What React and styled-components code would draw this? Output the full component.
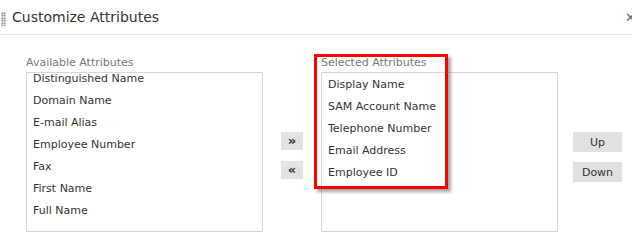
import React from "react";
import styled, { createGlobalStyle } from "styled-components";

const Global = createGlobalStyle`
  html, body { margin: 0; padding: 0; background: #fff; overflow: hidden; }
  body { font-family: "DejaVu Sans", Verdana, sans-serif; color: #333; }
  * { box-sizing: border-box; }
`;

const Dialog = styled.div`
  position: relative;
  width: 640px;
  height: 245px;
  background: #fff;
`;

const TitleBar = styled.div`
  height: 35px;
  display: flex;
  align-items: center;
  border-bottom: 1px solid #e3e3e3;
  padding-left: 1px;
  padding-right: 4px;
`;

const Grip = styled.span`
  width: 5px;
  height: 14px;
  margin-top: 3px;
  background-image: radial-gradient(circle, #999 0.9px, transparent 1px);
  background-size: 2.5px 2.5px;
`;

const Title = styled.h1`
  flex: 1;
  margin: 0 0 0 6px;
  font-size: 14px;
  font-weight: normal;
  color: #333;
`;

const Close = styled.span`
  font-size: 13px;
  color: #666;
  line-height: 1;
`;

const Body = styled.div`
  display: flex;
  align-items: flex-start;
  padding: 21px 0 0 26px;
`;

const Column = styled.div`
  display: flex;
  flex-direction: column;
  width: 237px;
`;

const Label = styled.div`
  font-size: 11px;
  color: #777;
  height: 16px;
  line-height: 14px;
`;

const ListBox = styled.div`
  height: 160px;
  border: 1px solid #d6d6d6;
  overflow: hidden;
`;

const List = styled.ul`
  list-style: none;
  margin: ${(p) => p.$offset}px 0 0 0;
  padding: 0;
`;

const Item = styled.li`
  height: 22px;
  line-height: 22px;
  padding-left: 6px;
  font-size: 11px;
  color: #333;
  white-space: nowrap;
`;

const ArrowCol = styled.div`
  display: flex;
  flex-direction: column;
  gap: 11px;
  margin: 76px 18px 0 18px;
`;

const ArrowButton = styled.button`
  width: 22px;
  height: 18px;
  padding: 0;
  border: none;
  background: #e1e3e4;
  color: #333;
  font-family: "DejaVu Sans", sans-serif;
  font-size: 13px;
  font-weight: bold;
  line-height: 16px;
`;

const ActionCol = styled.div`
  display: flex;
  flex-direction: column;
  gap: 10px;
  margin: 76px 0 0 15px;
`;

const ActionButton = styled.button`
  width: 49px;
  height: 20px;
  padding: 0;
  border: none;
  background: #dfe1e2;
  color: #333;
  font-family: "DejaVu Sans", sans-serif;
  font-size: 11px;
`;

const Highlight = styled.div`
  position: absolute;
  left: 314px;
  top: 54px;
  width: 134px;
  height: 135px;
  border: 3px solid #f00;
  box-shadow: 3px 3px 3px rgba(0, 0, 0, 0.35);
  pointer-events: none;
`;

const available = [
  "Distinguished Name",
  "Domain Name",
  "E-mail Alias",
  "Employee Number",
  "Fax",
  "First Name",
  "Full Name",
];

const selected = [
  "Display Name",
  "SAM Account Name",
  "Telephone Number",
  "Email Address",
  "Employee ID",
];

export default function App() {
  return (
    <Dialog>
      <Global />
      <TitleBar>
        <Grip />
        <Title>Customize Attributes</Title>
        <Close>✕</Close>
      </TitleBar>
      <Body>
        <Column>
          <Label>Available Attributes</Label>
          <ListBox>
            <List $offset={-5}>
              {available.map((a) => (
                <Item key={a}>{a}</Item>
              ))}
            </List>
          </ListBox>
        </Column>
        <ArrowCol>
          <ArrowButton>»</ArrowButton>
          <ArrowButton>«</ArrowButton>
        </ArrowCol>
        <Column>
          <Label>Selected Attributes</Label>
          <ListBox>
            <List $offset={1}>
              {selected.map((a) => (
                <Item key={a}>{a}</Item>
              ))}
            </List>
          </ListBox>
        </Column>
        <ActionCol>
          <ActionButton>Up</ActionButton>
          <ActionButton>Down</ActionButton>
        </ActionCol>
      </Body>
      <Highlight />
    </Dialog>
  );
}
